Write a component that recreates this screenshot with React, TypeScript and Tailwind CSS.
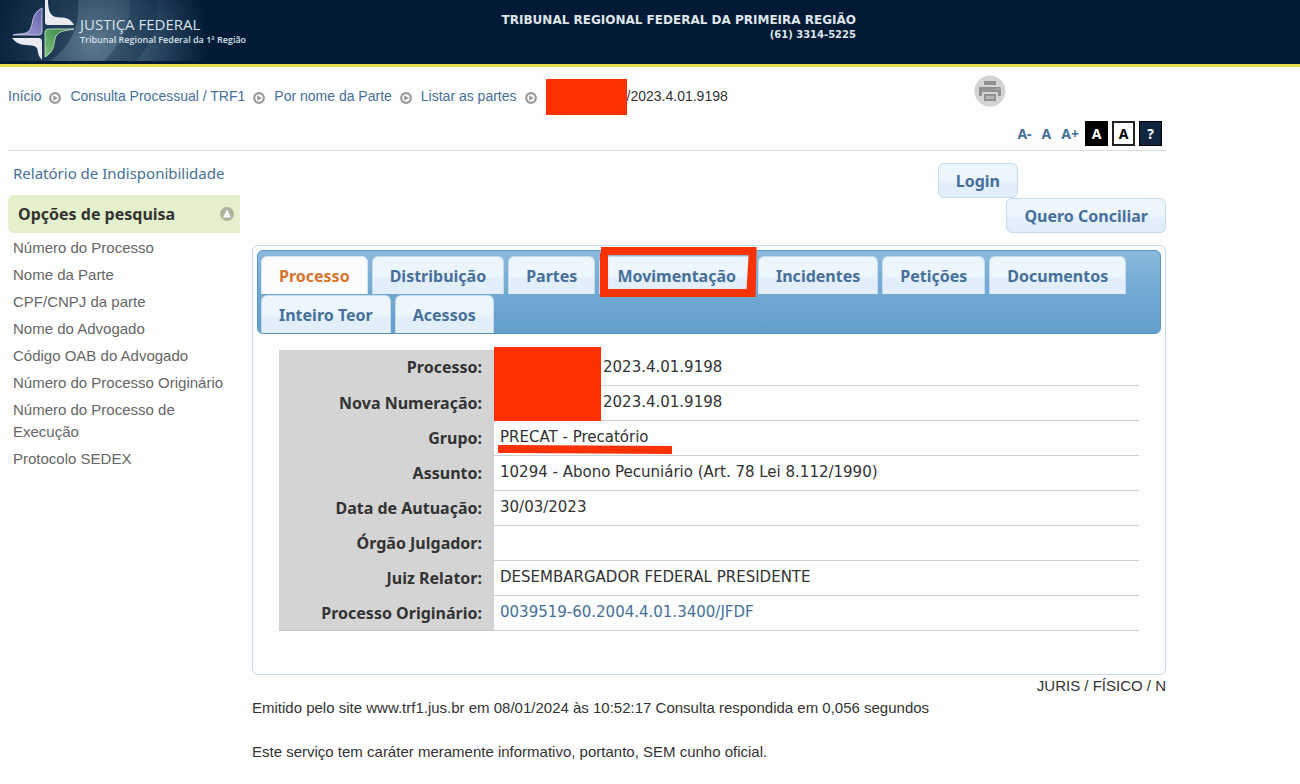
import type { ReactNode } from 'react';

const BREADCRUMBS = ['Início', 'Consulta Processual / TRF1', 'Por nome da Parte', 'Listar as partes'];

const SEARCH_OPTIONS = [
  'Número do Processo',
  'Nome da Parte',
  'CPF/CNPJ da parte',
  'Nome do Advogado',
  'Código OAB do Advogado',
  'Número do Processo Originário',
  'Número do Processo de Execução',
  'Protocolo SEDEX',
];

const TABS = [
  'Processo',
  'Distribuição',
  'Partes',
  'Movimentação',
  'Incidentes',
  'Petições',
  'Documentos',
  'Inteiro Teor',
  'Acessos',
];

const lucida = "font-['Noto_Sans',sans-serif]";
const arial = "font-['Liberation_Sans',Arial,sans-serif]";

function Logo() {
  return (
    <svg viewBox="0 0 260 64" className="absolute left-0 top-0 h-16 w-[260px]" aria-hidden="true">
      <defs>
        <radialGradient id="glow" gradientUnits="userSpaceOnUse" cx="94" cy="44" r="115">
          <stop offset="0" stopColor="#5c788e" />
          <stop offset="0.5" stopColor="#2f4c67" />
          <stop offset="1" stopColor="#021a36" />
        </radialGradient>
        <linearGradient id="green" x1="1" y1="0" x2="0" y2="1">
          <stop offset="0" stopColor="#2c7a3e" />
          <stop offset="1" stopColor="#7cc47c" />
        </linearGradient>
        <linearGradient id="purple" x1="0" y1="1" x2="1" y2="0">
          <stop offset="0" stopColor="#aaa6dc" />
          <stop offset="1" stopColor="#6360a8" />
        </linearGradient>
      </defs>
      <rect width="210" height="61" fill="url(#glow)" />
      <path d="M0 0h78c2 24-6 46-28 61H0Z" fill="#021a36" opacity="0.45" />
      <path d="M130 0c0 24-8 44-26 61h32c16-17 23-38 22-61Z" fill="#0b2745" opacity="0.35" />
      <path d="M45 0h3c0 10 2 16 8 17 6 1 13-1 18 8H48c-2 0-3-1-3-3Z" fill="#e9ebee" />
      <path d="M42 8v23c0 3-1 4-4 4H13c7-2 11 0 16-4 5-5 1-17 13-23Z" fill="url(#purple)" stroke="#d5d6ea" strokeWidth="0.8" />
      <path d="M74 29c-8 2-14 1-18 7-3 6 0 15-11 21V33c0-3 1-4 4-4Z" fill="url(#green)" stroke="#d6ead9" strokeWidth="0.8" />
      <path d="M12 38h26c3 0 4 1 4 4v18l-3-4c-2-5 0-8-5-10-6-2-16 1-22-8Z" fill="#e9ebee" />
    </svg>
  );
}

function BulletIcon() {
  return (
    <svg viewBox="0 0 12 12" className="mt-1 size-3 shrink-0" aria-hidden="true">
      <circle cx="6" cy="6" r="4.8" fill="#fff" stroke="#999" strokeWidth="2.2" />
      <path d="M4.2 3.2 8.8 6l-4.6 2.8Z" fill="#999" />
    </svg>
  );
}

function PrinterIcon() {
  return (
    <svg viewBox="0 0 32 32" className="size-8" aria-hidden="true">
      <circle cx="16" cy="16" r="15.5" fill="#d3d3d4" />
      <path d="M10 6h12v4H10ZM5 12h22v9h-3v-4H8v4H5Z" fill="#8e9092" />
      <path d="M5 15c8 1 15 0 22-3v3Z" fill="#a5a7a9" />
      <path d="M10 19h12v7H10Z" fill="#8e9092" />
      <path d="M12 21h8v3h-8Z" fill="#b4b5b6" />
    </svg>
  );
}

function Row({ label, children }: { label: string; children?: ReactNode }) {
  return (
    <tr className="h-[35px] border-b border-[#cfd0d2]">
      <th scope="row" className="w-1/4 bg-[#d4d4d4] pr-3 text-right text-base font-bold text-[#333]">
        {label}
      </th>
      <td className="pl-1.5 font-['DejaVu_Sans',sans-serif] text-[15px]">{children}</td>
    </tr>
  );
}

function ActionButton({ children }: { children: ReactNode }) {
  return (
    <button
      type="button"
      className="h-[35px] rounded-md border border-[#c5dbec] bg-linear-to-b from-[#edf5fd] from-50% to-[#e2effb] to-60% px-[17px] text-base font-bold text-[#467099]"
    >
      {children}
    </button>
  );
}

export default function App() {
  return (
    <div className={`min-h-screen bg-[#fefefe] text-[15px] text-[#333] ${arial}`}>
      <header className="relative h-[67px] border-b-[3px] border-[#e4df4c] bg-[#021a36]">
        <Logo />
        <div className="relative flex w-[66%] items-start justify-between">
          <div className="pl-20 pt-4 font-['Open_Sans',sans-serif] text-[#d9e2ea]">
            <p className="text-[15px] leading-4">JUSTIÇA FEDERAL</p>
            <p className="text-[9px] font-semibold leading-4">Tribunal Regional Federal da 1ª Região</p>
          </div>
          <div className="pr-0.5 pt-3 text-right font-['DejaVu_Sans',Verdana,sans-serif] font-bold text-[#dfe5ea]">
            <p className="text-xs leading-4">TRIBUNAL REGIONAL FEDERAL DA PRIMEIRA REGIÃO</p>
            <p className="text-[10px] leading-[14px]">(61) 3314-5225</p>
          </div>
        </div>
      </header>

      <div className="max-w-[1174px] px-2">
        <div className="flex items-start justify-between pt-2">
          <nav aria-label="Navegação" className="flex h-10 items-start gap-[9px] pt-1 text-sm leading-[34px]">
            {BREADCRUMBS.map((crumb) => (
              <span key={crumb} className="flex items-center gap-2">
                <a href="#" className="text-[#467099]">{crumb}</a>
                <BulletIcon />
              </span>
            ))}
            <span className="flex">
              <span className="h-9 w-[81px] bg-[#ff3000]" />
              /2023.4.01.9198
            </span>
          </nav>
          <button type="button" aria-label="Imprimir" className="mr-40">
            <PrinterIcon />
          </button>
        </div>

        <div className={`flex items-center justify-end gap-2.5 border-b border-[#ddd] pb-1 pr-1 pt-1.5 text-sm font-bold text-[#467099] ${lucida}`}>
          <button type="button">A-</button>
          <button type="button">A</button>
          <button type="button">A+</button>
          <div className="-ml-1 flex gap-1">
            <button type="button" className="h-[25px] w-[23px] bg-black text-white">A</button>
            <button type="button" className="h-[25px] w-[23px] border-2 border-[#222] bg-white text-black">A</button>
            <button type="button" className="h-[25px] w-[23px] border border-black bg-[#10233f] text-white">?</button>
          </div>
        </div>

        <div className="flex gap-3">
          <aside className="w-[232px] shrink-0">
            <a href="#" className={`block px-[5px] py-3 leading-5 text-[#467099] ${lucida}`}>
              Relatório de Indisponibilidade
            </a>
            <h2 className={`flex h-[38px] items-center justify-between rounded-l-md bg-[#e4efcb] pl-2.5 pr-1.5 text-base font-bold ${lucida}`}>
              Opções de pesquisa
              <svg viewBox="0 0 14 14" className="size-3.5" aria-hidden="true">
                <circle cx="7" cy="7" r="7" fill="#a9b49a" />
                <path d="m7 2.5 4 8H3Z" fill="#fff" />
              </svg>
            </h2>
            <ul className="flex flex-col gap-[5px] px-[5px] pt-1 leading-[22px]">
              {SEARCH_OPTIONS.map((option) => (
                <li key={option}>
                  <a href="#" className="text-[#666]">{option}</a>
                </li>
              ))}
            </ul>
          </aside>

          <main className="min-w-0 grow">
            <div className={`flex flex-col items-end pt-3 ${lucida}`}>
              <div className="mr-[148px] flex">
                <ActionButton>Login</ActionButton>
              </div>
              <ActionButton>Quero Conciliar</ActionButton>
            </div>

            <section className={`mt-3 rounded-md border border-[#c5dbec] bg-[#fcfdfd] px-1 pb-[43px] pt-1 ${lucida}`}>
              <div
                role="tablist"
                className="flex flex-wrap gap-x-1 gap-y-px rounded-md border border-[#5696c4] bg-linear-to-b from-[#8cb8dc] via-[#71a9d3] to-[#649fcc] px-[3px] pt-[5px]"
              >
                {TABS.map((tab) => (
                  <button
                    key={tab}
                    type="button"
                    role="tab"
                    aria-selected={tab === 'Processo'}
                    className={`relative h-[38px] rounded-t-md border border-b-0 px-[17px] text-base font-bold ${
                      tab === 'Processo'
                        ? 'border-[#d5e5f0] bg-[#fafcfd] text-[#d9742b]'
                        : 'border-[#c5dbec] bg-linear-to-b from-[#edf5fd] from-50% to-[#e2effb] to-60% text-[#467099]'
                    }`}
                  >
                    {tab}
                    {tab === 'Movimentação' && (
                      <svg
                        viewBox="0 0 156 50"
                        preserveAspectRatio="none"
                        className="pointer-events-none absolute left-0 -top-2.5 h-[50px] w-[calc(100%+4px)]"
                        aria-hidden="true"
                      >
                        <path d="M1 0h155l-1 50H0V6h1Zm7 8v34h138l2-34Z" fill="#fb3205" fillRule="evenodd" />
                      </svg>
                    )}
                  </button>
                ))}
              </div>

              <div className="relative mx-[22px] mt-4">
                <table className="w-full border-collapse">
                  <tbody>
                    <Row label="Processo:">
                      <span className="pl-[103px]">2023.4.01.9198</span>
                    </Row>
                    <Row label="Nova Numeração:">
                      <span className="pl-[103px]">2023.4.01.9198</span>
                    </Row>
                    <Row label="Grupo:">
                      <span className="relative">
                        PRECAT - Precatório
                        <svg viewBox="0 0 174 10" preserveAspectRatio="none" className="absolute -left-0.5 top-[17px] h-2.5 w-[174px]" aria-hidden="true">
                          <path d="M0 0 174 1v8L0 8Z" fill="#fb3205" />
                        </svg>
                      </span>
                    </Row>
                    <Row label="Assunto:">10294 - Abono Pecuniário (Art. 78 Lei 8.112/1990)</Row>
                    <Row label="Data de Autuação:">30/03/2023</Row>
                    <Row label="Órgão Julgador:" />
                    <Row label="Juiz Relator:">DESEMBARGADOR FEDERAL PRESIDENTE</Row>
                    <Row label="Processo Originário:">
                      <a href="#" className="text-[#467099]">0039519-60.2004.4.01.3400/JFDF</a>
                    </Row>
                  </tbody>
                </table>
                <div className="absolute -top-[3px] left-1/4 h-[74px] w-[107px] bg-[#ff3000]" />
              </div>
            </section>

            <footer className="leading-[22px]">
              <p className="text-right">JURIS / FÍSICO / N</p>
              <p>Emitido pelo site www.trf1.jus.br em 08/01/2024 às 10:52:17 Consulta respondida em 0,056 segundos</p>
              <p className="mt-[22px]">Este serviço tem caráter meramente informativo, portanto, SEM cunho oficial.</p>
            </footer>
          </main>
        </div>
      </div>
    </div>
  );
}
